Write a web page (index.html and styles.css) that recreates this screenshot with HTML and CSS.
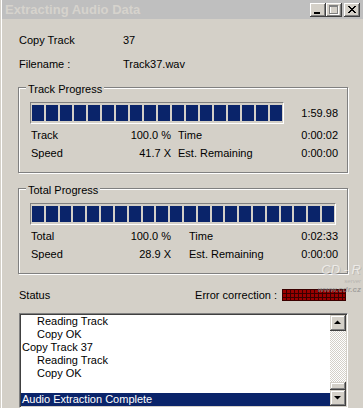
FILE: index.html
```html
<!DOCTYPE html>
<html lang="en">
<head>
  <meta charset="UTF-8" />
  <title>Extracting Audio Data</title>
  <link rel="stylesheet" href="styles.css">
</head>
<body>
  <div class="window">
    <div class="titlebar">
      <span class="title">Extracting Audio Data</span>
      <div class="caption-buttons">
        <span class="cap-btn">
          <svg width="16" height="14" viewBox="0 0 16 14"><rect x="4" y="9" width="6" height="2" fill="#000"/></svg>
        </span>
        <span class="cap-btn">
          <svg width="16" height="14" viewBox="0 0 16 14">
            <rect x="4.5" y="3.5" width="8" height="8" fill="none" stroke="#fff"/>
            <rect x="3.5" y="2.5" width="8" height="8" fill="none" stroke="#808080"/>
            <rect x="3" y="3" width="9" height="1" fill="#808080"/>
          </svg>
        </span>
        <span class="cap-btn cap-close">
          <svg width="16" height="14" viewBox="0 0 16 14">
            <path d="M4 3 L11 10 M5 3 L12 10 M11 3 L4 10 M12 3 L5 10" stroke="#000" stroke-width="1" fill="none"/>
          </svg>
        </span>
      </div>
    </div>

    <div class="content">
      <div class="info">
        <div class="info-row"><span class="info-label">Copy Track</span><span>37</span></div>
        <div class="info-row"><span class="info-label">Filename :</span><span>Track37.wav</span></div>
      </div>

      <div class="group group-track">
        <span class="group-title">Track Progress</span>
        <div class="bar-line">
          <div class="progress progress-track">
            <span></span><span></span><span></span><span></span><span></span><span></span>
            <span></span><span></span><span></span><span></span><span></span><span></span>
            <span></span><span></span><span></span><span></span><span></span><span></span>
          </div>
          <span class="bar-time">1:59.98</span>
        </div>
        <div class="stats">
          <span>Track</span><span class="num">100.0 %</span><span class="label2">Time</span><span class="num">0:00:02</span>
          <span>Speed</span><span class="num">41.7 X</span><span class="label2">Est. Remaining</span><span class="num">0:00:00</span>
        </div>
      </div>

      <div class="group group-total">
        <span class="group-title">Total Progress</span>
        <div class="bar-line">
          <div class="progress progress-total">
            <span></span><span></span><span></span><span></span><span></span><span></span>
            <span></span><span></span><span></span><span></span><span></span><span></span>
            <span></span><span></span><span></span><span></span><span></span><span></span>
            <span></span><span></span><span></span><span></span>
          </div>
        </div>
        <div class="stats">
          <span>Total</span><span class="num">100.0 %</span><span class="label2">Time</span><span class="num">0:02:33</span>
          <span>Speed</span><span class="num">28.9 X</span><span class="label2">Est. Remaining</span><span class="num">0:00:00</span>
        </div>
      </div>

      <div class="status-row">
        <span>Status</span>
        <span class="ec-label">Error correction :</span>
        <span class="led"></span>
      </div>

      <div class="listbox">
        <div class="list">
          <div class="list-item sub">Reading Track</div>
          <div class="list-item sub">Copy OK</div>
          <div class="list-item">Copy Track 37</div>
          <div class="list-item sub">Reading Track</div>
          <div class="list-item sub">Copy OK</div>
          <div class="list-item"></div>
          <div class="list-item selected">Audio Extraction Complete</div>
        </div>
        <div class="scrollbar">
          <span class="sb-btn">
            <svg width="16" height="16" viewBox="0 0 16 16"><polygon points="4,9 11,9 7.5,5.5" fill="#000"/></svg>
          </span>
          <div class="sb-track"><span class="sb-thumb"></span></div>
          <span class="sb-btn">
            <svg width="16" height="16" viewBox="0 0 16 16"><polygon points="4,6 11,6 7.5,9.5" fill="#000"/></svg>
          </span>
        </div>
      </div>
    </div>

    <div class="watermark">
      <span class="wm-logo">CD - R</span>
      <span class="wm-server">server</span>
      <span class="wm-url">www.cdr.cz</span>
    </div>
  </div>
</body>
</html>
```

FILE: styles.css
```css
body {
  margin: 0;
  font-family: "Liberation Sans", Arial, sans-serif;
  font-size: 11px;
  color: #000;
  background: #d4d0c8;
}
.window {
  position: relative;
  width: 363px;
  height: 408px;
  overflow: hidden;
  background: #d4d0c8;
  box-shadow: inset 1px 0 #d4d0c8, inset 2px 0 #fff;
}
.titlebar {
  display: flex;
  align-items: center;
  justify-content: space-between;
  height: 19px;
  margin-left: 2px;
  background: #bfbfbf;
}
.title {
  padding-left: 3px;
  font-size: 13px;
  font-weight: bold;
  color: #d6d3cd;
}
.caption-buttons {
  display: flex;
  padding-right: 3px;
}
.cap-btn {
  display: flex;
  width: 16px;
  height: 14px;
  background: #d4d0c8;
  box-shadow: inset -1px -1px #404040, inset 1px 1px #fff, inset -2px -2px #808080;
}
.cap-close {
  margin-left: 2px;
}
.content {
  padding: 9px 0 0 18px;
}
.info-row {
  display: flex;
  align-items: center;
  height: 24px;
  padding-left: 1px;
}
.info-label {
  width: 104px;
}
.group {
  position: relative;
  width: 330px;
  box-sizing: border-box;
  border: 1px solid #808080;
  box-shadow: inset 1px 1px #fff, 1px 1px #fff;
  padding: 14px 9px 10px 11px;
}
.group-track {
  margin-top: 11px;
}
.group-total {
  margin-top: 15px;
}
.group-title {
  position: absolute;
  top: -5px;
  left: 7px;
  padding: 0 2px;
  line-height: 13px;
  background: #d4d0c8;
}
.bar-line {
  display: flex;
  align-items: center;
}
.progress {
  display: flex;
  gap: 2px;
  box-sizing: border-box;
  height: 22px;
  padding: 2px 1px;
  border: 1px solid;
  border-color: #808080 #fff #fff #808080;
}
.progress span {
  flex: 1;
  background: #0a246a;
}
.progress-track {
  width: 254px;
}
.progress-total {
  width: 306px;
}
.bar-time {
  margin-left: auto;
}
.stats {
  display: grid;
  grid-template-columns: 80px 60px 1fr auto;
  grid-auto-rows: 18px;
  align-items: center;
  margin-top: 2px;
  padding-left: 1px;
}
.stats .num {
  text-align: right;
}
.stats .label2 {
  padding-left: 7px;
}
.group-total .stats .label2 {
  padding-left: 18px;
}
.status-row {
  display: flex;
  align-items: center;
  width: 330px;
  height: 14px;
  box-sizing: border-box;
  margin-top: 14px;
  padding: 0 2px 0 1px;
}
.ec-label {
  margin-left: auto;
  margin-right: 5px;
}
.led {
  width: 64px;
  height: 12px;
  box-sizing: border-box;
  border: 1px solid #3a0000;
  background-color: #9a0000;
  background-image:
    linear-gradient(to right, #3a0000 1px, transparent 1px),
    linear-gradient(to bottom, #3a0000 1px, transparent 1px);
  background-size: 4px 4px;
  background-position: 3px 3px;
}
.listbox {
  display: flex;
  width: 329px;
  height: 95px;
  box-sizing: border-box;
  margin: 11px 0 0 1px;
  padding: 1px;
  border: 1px solid;
  border-color: #808080 #fff #fff #808080;
  box-shadow: inset 1px 1px #404040, inset -1px -1px #d4d0c8;
  background: #fff;
}
.list {
  flex: 1;
}
.list-item {
  height: 13px;
  line-height: 13px;
  padding-left: 1px;
  white-space: nowrap;
}
.list-item.sub {
  padding-left: 16px;
}
.list-item.selected {
  background: #0a246a;
  color: #fff;
}
.scrollbar {
  display: flex;
  flex-direction: column;
  width: 16px;
}
.sb-btn,
.sb-thumb {
  display: flex;
  flex: none;
  background: #d4d0c8;
  box-shadow: inset -1px -1px #404040, inset 1px 1px #d4d0c8, inset -2px -2px #808080, inset 2px 2px #fff;
}
.sb-btn {
  height: 16px;
}
.sb-track {
  flex: 1;
  display: flex;
  flex-direction: column;
  justify-content: flex-end;
  background: repeating-conic-gradient(#d4d0c8 0 25%, #fff 0 50%) 0 0 / 2px 2px;
}
.sb-thumb {
  height: 8px;
}
.watermark {
  position: absolute;
  top: 262px;
  left: 305px;
  width: 56px;
  display: flex;
  flex-direction: column;
  align-items: flex-end;
  pointer-events: none;
}
.wm-logo {
  font-size: 13px;
  font-style: italic;
  color: rgba(255, 255, 255, 0.6);
  text-shadow: 1px 1px rgba(120, 120, 120, 0.25);
  line-height: 15px;
}
.wm-server {
  font-size: 6px;
  font-style: italic;
  color: rgba(150, 150, 150, 0.5);
  line-height: 8px;
}
.wm-url {
  font-size: 8px;
  font-weight: bold;
  font-style: italic;
  color: rgba(140, 140, 140, 0.7);
  line-height: 10px;
}
```
